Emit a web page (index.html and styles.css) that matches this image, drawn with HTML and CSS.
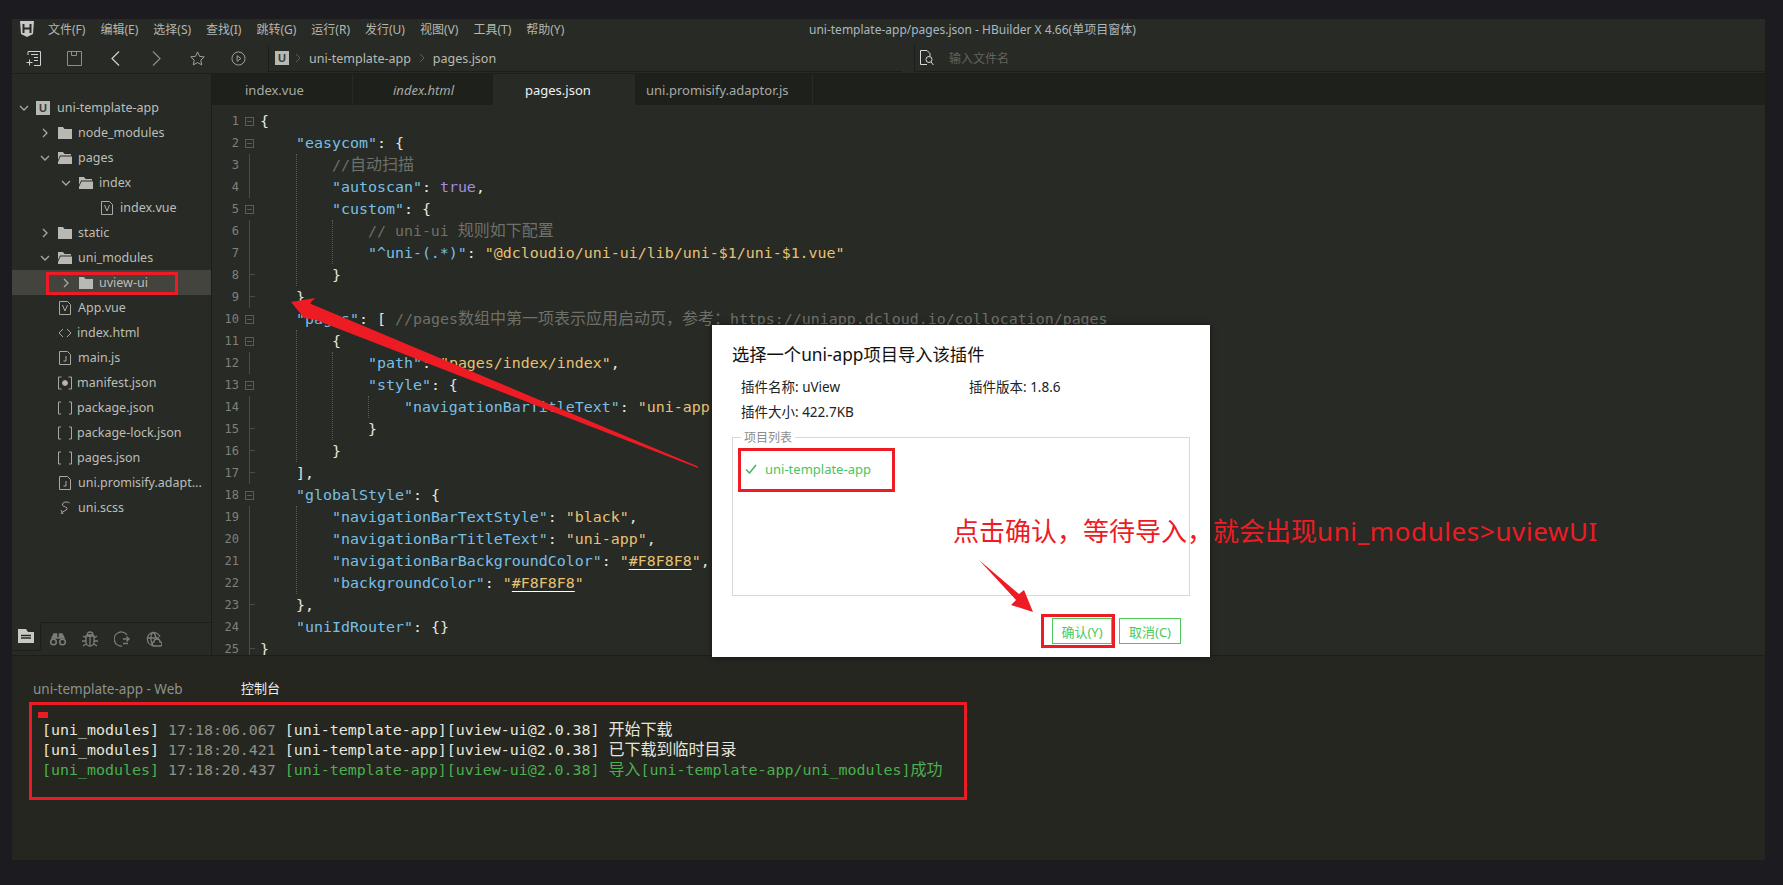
FILE: index.html
```html
<!DOCTYPE html>
<html lang="zh">
<head>
    <meta charset="UTF-8">
    <title>HBuilder X</title>
    <link rel="stylesheet" href="styles.css">
</head>
<body>
<div class="app">
    <!-- Menu bar -->
    <div class="menubar">
        <svg class="logo" width="14" height="16" viewBox="0 0 14 16"><path d="M0 0h14l-1 13-6 3-6-3z" fill="#c8c8c8"/><path d="M3.500 3v9M10.500 3v9M3.500 7.500h7" stroke="#282a25" stroke-width="2" fill="none"/></svg>
        <div class="menu">
            <span>文件(F)</span><span>编辑(E)</span><span>选择(S)</span><span>查找(I)</span><span>跳转(G)</span><span>运行(R)</span><span>发行(U)</span><span>视图(V)</span><span>工具(T)</span><span>帮助(Y)</span>
        </div>
        <div class="window-title">uni-template-app/pages.json - HBuilder X 4.66(单项目窗体)</div>
    </div>

    <!-- Toolbar -->
    <div class="toolbar">
        <div class="tools">
            <svg width="15" height="15" viewBox="0 0 15 15" fill="none" stroke="#d0d0d0"><path d="M2 4V.5h12.500v14H8M5 3.500h7M8 6.500h4M8 9.500h4M.5 11.500h6M3.500 8.500v6"/></svg>
            <svg width="15" height="15" viewBox="0 0 15 15" fill="none" stroke="#8c8e88"><path d="M.5.5h14v14H.5zM4.500.5v4h5v-4"/></svg>
            <svg width="9" height="15" viewBox="0 0 9 15" fill="none" stroke="#d0d0d0" stroke-width="1.200"><path d="M8 .5L1 7.500l7 7"/></svg>
            <svg width="9" height="15" viewBox="0 0 9 15" fill="none" stroke="#8c8e88" stroke-width="1.200"><path d="M1 .5l7 7-7 7"/></svg>
            <svg width="15" height="15" viewBox="0 0 16 16" fill="none" stroke="#a8a8a4"><path d="M8 1l2.200 4.700 5 .6-3.700 3.500 1 5L8 12.300 3.500 14.800l1-5L.8 6.300l5-.6z"/></svg>
            <svg width="15" height="15" viewBox="0 0 16 16" fill="none" stroke="#a8a8a4"><circle cx="8" cy="8" r="7"/><path d="M6.500 5l4 3-4 3z"/></svg>
        </div>
        <div class="crumbs">
            <span class="u-badge first">U</span>
            <svg class="crumb-sep" width="6" height="10" viewBox="0 0 6 10" fill="none" stroke="#5c5e58"><path d="M1 1l4 4-4 4"/></svg>
            <span>uni-template-app</span>
            <svg class="crumb-sep" width="6" height="10" viewBox="0 0 6 10" fill="none" stroke="#5c5e58"><path d="M1 1l4 4-4 4"/></svg>
            <span>pages.json</span>
        </div>
        <div class="file-search">
            <svg width="16" height="16" viewBox="0 0 16 16" fill="none" stroke="#d8d8d8"><path d="M8 .5H1.500v14H8M8 .5l3 3v3"/><circle cx="10" cy="9.500" r="3"/><path d="M12 12l2.500 3"/></svg>
            <span>输入文件名</span>
        </div>
    </div>

    <div class="workspace">
        <!-- Project tree -->
        <aside class="sidebar">
            <div class="tree">
                <div class="row lvl0"><svg class="chev" viewBox="0 0 10 10"><path d="M1 3l4 4 4-4"/></svg><span class="u-badge small">U</span><span>uni-template-app</span></div>
                <div class="row lvl1"><svg class="chev" viewBox="0 0 10 10"><path d="M3 1l4 4-4 4"/></svg><svg class="folder" viewBox="0 0 14 14"><path d="M0 1h5l1.500 2H14v10H0z"/></svg><span>node_modules</span></div>
                <div class="row lvl1"><svg class="chev" viewBox="0 0 10 10"><path d="M1 3l4 4 4-4"/></svg><svg class="folder" viewBox="0 0 14 14"><path d="M0 1h5l1.500 2H13v1.500H2L0 9z"/><path d="M2.500 5.500H14V13H0v-2z"/></svg><span>pages</span></div>
                <div class="row lvl2"><svg class="chev" viewBox="0 0 10 10"><path d="M1 3l4 4 4-4"/></svg><svg class="folder" viewBox="0 0 14 14"><path d="M0 1h5l1.500 2H13v1.500H2L0 9z"/><path d="M2.500 5.500H14V13H0v-2z"/></svg><span>index</span></div>
                <div class="row lvl3"><svg class="file" viewBox="0 0 12 14"><path d="M.5.5h8l3 3v10H.5z"/><path d="M3.500 4l2.500 6 2.500-6"/></svg><span>index.vue</span></div>
                <div class="row lvl1"><svg class="chev" viewBox="0 0 10 10"><path d="M3 1l4 4-4 4"/></svg><svg class="folder" viewBox="0 0 14 14"><path d="M0 1h5l1.500 2H14v10H0z"/></svg><span>static</span></div>
                <div class="row lvl1"><svg class="chev" viewBox="0 0 10 10"><path d="M1 3l4 4 4-4"/></svg><svg class="folder" viewBox="0 0 14 14"><path d="M0 1h5l1.500 2H13v1.500H2L0 9z"/><path d="M2.500 5.500H14V13H0v-2z"/></svg><span>uni_modules</span></div>
                <div class="row lvl2 selected"><svg class="chev" viewBox="0 0 10 10"><path d="M3 1l4 4-4 4"/></svg><svg class="folder" viewBox="0 0 14 14"><path d="M0 1h5l1.500 2H14v10H0z"/></svg><span>uview-ui</span><i class="mark-tree"></i></div>
                <div class="row lvl1b"><svg class="file" viewBox="0 0 12 14"><path d="M.5.5h8l3 3v10H.5z"/><path d="M3.500 4l2.500 6 2.500-6"/></svg><span>App.vue</span></div>
                <div class="row lvl1b"><svg class="glyph" viewBox="0 0 14 14"><path d="M5 3L1 7l4 4M9 3l4 4-4 4"/></svg><span>index.html</span></div>
                <div class="row lvl1b"><svg class="file" viewBox="0 0 12 14"><path d="M.5.5h8l3 3v10H.5z"/><path d="M7 5v5H4.500"/></svg><span>main.js</span></div>
                <div class="row lvl1b"><svg class="glyph" viewBox="0 0 14 14"><path d="M3.500 1H.5v12h3M10.500 1h3v12h-3"/><circle cx="7" cy="7" r="2.500" fill="#b8b8b4"/></svg><span>manifest.json</span></div>
                <div class="row lvl1b"><svg class="glyph" viewBox="0 0 14 14"><path d="M3 1H.5v12H3M11 1h2.500v12H11"/></svg><span>package.json</span></div>
                <div class="row lvl1b"><svg class="glyph" viewBox="0 0 14 14"><path d="M3 1H.5v12H3M11 1h2.500v12H11"/></svg><span>package-lock.json</span></div>
                <div class="row lvl1b"><svg class="glyph" viewBox="0 0 14 14"><path d="M3 1H.5v12H3M11 1h2.500v12H11"/></svg><span>pages.json</span></div>
                <div class="row lvl1b"><svg class="file" viewBox="0 0 12 14"><path d="M.5.5h8l3 3v10H.5z"/><path d="M7 5v5H4.500"/></svg><span>uni.promisify.adapt...</span></div>
                <div class="row lvl1b"><svg class="file" viewBox="0 0 12 14"><path d="M10.500 2C8 0 3 1 3.500 4c.5 2 5 1.500 4.500 4-.5 2-5 2-6 5M2 9l2 4"/></svg><span>uni.scss</span></div>
            </div>
            <div class="side-tabs">
                <div class="side-tab active"><svg width="16" height="14" viewBox="0 0 16 14"><path d="M0 0h8l2 3h6v11H0z" fill="#c8c8c4"/><path d="M3 6.500h10M3 9h10" stroke="#282a25" stroke-width="1.500"/></svg></div>
                <svg width="16" height="14" viewBox="0 0 16 14" fill="none" stroke="#7c7e78" stroke-width="1.500"><circle cx="3.500" cy="10" r="2.800"/><circle cx="12.500" cy="10" r="2.800"/><path d="M2 6l2-4h2.500v4h3V2H12l2 4z" fill="#7c7e78"/></svg>
                <svg width="16" height="16" viewBox="0 0 16 16" fill="none" stroke="#7c7e78" stroke-width="1.300"><path d="M5 4a3 3 0 0 1 6 0zM4 5h8v6a4 4 0 0 1-8 0zM8 5v10M4 7L1 5M12 7l3-2M4 10H0M12 10h4M4 13l-3 2M12 13l3 2"/></svg>
                <svg width="16" height="16" viewBox="0 0 16 16" fill="none" stroke="#7c7e78" stroke-width="1.300"><path d="M13 4A7 7 0 1 0 8 15M9 8h6M12.500 5.500L15 8l-2.500 2.500M9 12.500h5"/></svg>
                <svg width="16" height="16" viewBox="0 0 16 16" fill="none" stroke="#7c7e78" stroke-width="1.300"><path d="M7 14.500A6.500 6.500 0 1 1 14 6M1 7h12M7 1c-3 3-3 9 0 13M7 1c2 2 3 4 3 6"/><path d="M8 15a2 2 0 0 1 0-4 3 3 0 0 1 6 0 2 2 0 0 1 0 4z"/></svg>
            </div>
        </aside>

        <!-- Editor -->
        <main class="editor">
            <div class="tabs">
                <div class="tab t1">index.vue</div>
                <div class="tab t2"><em>index.html</em></div>
                <div class="tab t3 active">pages.json</div>
                <div class="tab t4">uni.promisify.adaptor.js</div>
            </div>
            <div class="code">
                <div class="gutter">
                    <div class="ln">1<b class="fold"></b></div>
                    <div class="ln">2<b class="fold"></b></div>
                    <div class="ln">3<b class="vl"></b></div>
                    <div class="ln">4<b class="vl"></b></div>
                    <div class="ln">5<b class="fold"></b></div>
                    <div class="ln">6<b class="vl"></b></div>
                    <div class="ln">7<b class="vl"></b></div>
                    <div class="ln">8<b class="vl end"></b></div>
                    <div class="ln">9<b class="vl end"></b></div>
                    <div class="ln">10<b class="fold"></b></div>
                    <div class="ln">11<b class="fold"></b></div>
                    <div class="ln">12<b class="vl"></b></div>
                    <div class="ln">13<b class="fold"></b></div>
                    <div class="ln">14<b class="vl"></b></div>
                    <div class="ln">15<b class="vl end"></b></div>
                    <div class="ln">16<b class="vl end"></b></div>
                    <div class="ln">17<b class="vl end"></b></div>
                    <div class="ln">18<b class="fold"></b></div>
                    <div class="ln">19<b class="vl"></b></div>
                    <div class="ln">20<b class="vl"></b></div>
                    <div class="ln">21<b class="vl"></b></div>
                    <div class="ln">22<b class="vl"></b></div>
                    <div class="ln">23<b class="vl end"></b></div>
                    <div class="ln">24<b class="vl"></b></div>
                    <div class="ln">25<b class="vl end"></b></div>
                </div>
                <div class="source-wrap">
                    <i class="guide g1"></i><i class="guide g2"></i><i class="guide g3"></i><i class="guide g4"></i><i class="guide g5"></i><i class="guide g6"></i>
<pre class="source"><span class="w">{</span>
    <span class="k">"easycom"</span><span class="w">: {</span>
        <span class="c">//<span class="zh">自动扫描</span></span>
        <span class="k">"autoscan"</span><span class="w">: </span><span class="b">true</span><span class="w">,</span>
        <span class="k">"custom"</span><span class="w">: {</span>
            <span class="c">// uni-ui <span class="zh">规则如下配置</span></span>
            <span class="k">"^uni-(.*)"</span><span class="w">: </span><span class="s">"@dcloudio/uni-ui/lib/uni-$1/uni-$1.vue"</span>
        <span class="w">}</span>
    <span class="w">},</span>
    <span class="k">"pages"</span><span class="w">: [ </span><span class="c">//pages<span class="zh">数组中第一项表示应用启动页，参考：</span>https://uniapp.dcloud.io/collocation/pages</span>
        <span class="w">{</span>
            <span class="k">"path"</span><span class="w">: </span><span class="s">"pages/index/index"</span><span class="w">,</span>
            <span class="k">"style"</span><span class="w">: {</span>
                <span class="k">"navigationBarTitleText"</span><span class="w">: </span><span class="s">"uni-app"</span>
            <span class="w">}</span>
        <span class="w">}</span>
    <span class="w">],</span>
    <span class="k">"globalStyle"</span><span class="w">: {</span>
        <span class="k">"navigationBarTextStyle"</span><span class="w">: </span><span class="s">"black"</span><span class="w">,</span>
        <span class="k">"navigationBarTitleText"</span><span class="w">: </span><span class="s">"uni-app"</span><span class="w">,</span>
        <span class="k">"navigationBarBackgroundColor"</span><span class="w">: </span><span class="s">"<u>#F8F8F8</u>"</span><span class="w">,</span>
        <span class="k">"backgroundColor"</span><span class="w">: </span><span class="s">"<u>#F8F8F8</u>"</span>
    <span class="w">},</span>
    <span class="k">"uniIdRouter"</span><span class="w">: {}</span>
<span class="w">}</span></pre>
                </div>
            </div>
        </main>
    </div>

    <!-- Console -->
    <section class="console">
        <div class="console-tabs">
            <span class="ctab">uni-template-app - Web</span>
            <span class="ctab active">控制台</span>
        </div>
        <div class="log mark-box">
            <i class="dot"></i>
            <div class="log-line"><span class="w">[uni_modules]</span> <span class="time">17:18:06.067</span> <span class="w">[uni-template-app][uview-ui@2.0.38]</span> <span class="w zh">开始下载</span></div>
            <div class="log-line"><span class="w">[uni_modules]</span> <span class="time">17:18:20.421</span> <span class="w">[uni-template-app][uview-ui@2.0.38]</span> <span class="w zh">已下载到临时目录</span></div>
            <div class="log-line ok">[uni_modules] <span class="time">17:18:20.437</span> [uni-template-app][uview-ui@2.0.38] <span class="zh">导入</span>[uni-template-app/uni_modules]<span class="zh">成功</span></div>
        </div>
    </section>
</div>

<!-- Import dialog, over the editor -->
<div class="dialog">
    <h3>选择一个uni-app项目导入该插件</h3>
    <div class="info">
        <span>插件名称: uView</span><span>插件版本: 1.8.6</span>
        <span>插件大小: 422.7KB</span>
    </div>
    <div class="project-list">
        <span class="legend">项目列表</span>
        <div class="project mark-box">
            <svg width="12" height="10" viewBox="0 0 12 10" fill="none" stroke="#3fb56b" stroke-width="1.500"><path d="M1 5.500L4.500 9 11 1"/></svg>
            <span>uni-template-app</span>
        </div>
    </div>
    <div class="actions">
        <span class="btn-mark"><button class="btn">确认(Y)</button></span>
        <button class="btn cancel">取消(C)</button>
    </div>
</div>

<!-- Screenshot annotations -->
<div class="note">点击确认，等待导入，就会出现<span class="note-latin">uni_modules&gt;uviewUI</span></div>
<svg class="arrows" width="1783" height="885" viewBox="0 0 1783 885">
    <path d="M291 302L315 298L310 303.600L698 466.500V468L316 320L304 318z" fill="#ed1c24"/>
    <path d="M979 560L1019 594L1024 590L1033 612L1011 605L1016 600z" fill="#ed1c24"/>
</svg>
</body>
</html>
```

FILE: styles.css
```css
/* General Styles */
html, body {
    margin: 0;
    height: 885px;
    overflow: hidden;
}

body {
    position: relative;
    background: #1b1b20;
    padding: 19px 18px 25px 12px;
    box-sizing: border-box;
    font-family: "Noto Sans", "Noto Sans CJK SC", sans-serif;
    font-size: 12px;
    color: #c8c8c4;
}

.app {
    height: 841px;
    background: #282a25;
    display: flex;
    flex-direction: column;
}

/* Menu bar */
.menubar {
    height: 20px;
    display: flex;
    align-items: center;
    padding: 0 0 4px 8px;
    flex: none;
    position: relative;
}

.logo {
    margin-right: 14px;
}

.menu {
    display: flex;
    gap: 15px;
    color: #b4b6b0;
}

.window-title {
    position: absolute;
    left: 797px;
    top: 1px;
    color: #a8b8c4;
    font-size: 12px;
}

/* Toolbar */
.toolbar {
    height: 30px;
    flex: none;
    display: flex;
    align-items: center;
    border-bottom: 1px solid #1c1e19;
}

.tools {
    width: 256px;
    flex: none;
    padding-left: 1px;
    box-sizing: border-box;
    display: grid;
    grid-template-columns: repeat(6, 41px);
    justify-items: center;
    align-items: center;
}

.crumbs {
    width: 634px;
    height: 27px;
    flex: none;
    box-sizing: border-box;
    display: flex;
    align-items: center;
    gap: 8px;
    padding-left: 6px;
    margin-bottom: -1px;
    color: #b8bab4;
    border-bottom: 1px solid #1c1e19;
    border-left: 1px solid #1c1e19;
    font-size: 12.500px;
}

.u-badge.first {
    margin-right: -2px;
}

.file-search {
    margin-left: 12px;
    flex: 1;
    height: 27px;
    margin-bottom: -1px;
    box-sizing: border-box;
    display: flex;
    align-items: center;
    gap: 14px;
    padding-left: 4px;
    color: #62645e;
    border-bottom: 1px solid #1c1e19;
    border-left: 1px solid #1c1e19;
}

.u-badge {
    width: 14px;
    height: 14px;
    background: #b8b8b4;
    color: #3a3c37;
    font: bold 11px/14px "Liberation Sans", sans-serif;
    text-align: center;
    display: inline-block;
}

/* Workspace */
.workspace {
    flex: none;
    height: 581px;
    display: flex;
    border-bottom: 1px solid #1c1e19;
}

.sidebar {
    width: 199px;
    flex: none;
    border-right: 1px solid #1c1e19;
    display: flex;
    flex-direction: column;
    justify-content: space-between;
}

.tree {
    padding-top: 21px;
    font-size: 12.500px;
    color: #bcbeb8;
}

.row {
    height: 25px;
    display: flex;
    align-items: center;
    position: relative;
    white-space: nowrap;
}

.row.selected {
    background: #42443d;
}

.lvl0 { padding-left: 7px; }
.lvl1 { padding-left: 28px; }
.lvl1b { padding-left: 47px; }
.lvl2 { padding-left: 49px; }
.lvl3 { padding-left: 89px; }

.chev {
    width: 10px;
    height: 10px;
    margin-right: 8px;
    fill: none;
    stroke: #a8a8a4;
    stroke-width: 1.300;
}

.lvl0 .u-badge {
    margin-right: 7px;
    flex: none;
}

.lvl0 .chev {
    margin-right: 7px;
}

.folder {
    width: 14px;
    height: 14px;
    margin-right: 6px;
    fill: #b8b8b4;
}

.file {
    width: 12px;
    height: 14px;
    margin-right: 7px;
    fill: none;
    stroke: #a8a8a4;
}

.glyph {
    width: 14px;
    height: 14px;
    margin: 0 5px 0 -1px;
    fill: none;
    stroke: #a8a8a4;
}

.side-tabs {
    height: 33px;
    display: flex;
    align-items: center;
    gap: 16px;
    position: relative;
}

.side-tabs::before {
    content: "";
    position: absolute;
    left: 29px;
    right: 0;
    top: 0;
    height: 1px;
    background: #1c1e19;
}

.side-tab {
    width: 29px;
    height: 29px;
    align-self: flex-start;
    margin-right: -7px;
    box-sizing: border-box;
    display: flex;
    align-items: center;
    justify-content: center;
    background: #282a25;
    border-right: 1px solid #1c1e19;
    border-bottom: 1px solid #1c1e19;
    border-bottom-right-radius: 3px;
}

/* Editor */
.editor {
    flex: 1;
    min-width: 0;
    min-height: 0;
    display: flex;
    flex-direction: column;
}

.tabs {
    height: 31px;
    flex: none;
    display: flex;
    background: #1e201b;
    font-size: 13px;
    color: #a8aaa4;
}

.tab {
    display: flex;
    align-items: center;
    border-right: 1px solid #282a25;
}

.t1 { width: 141px; padding-left: 33px; box-sizing: border-box; }
.t2 { width: 141px; padding-left: 40px; box-sizing: border-box; }
.t3 { width: 141px; padding-left: 31px; box-sizing: border-box; }
.t4 { width: 178px; padding-left: 11px; box-sizing: border-box; }

.tab.active {
    background: #282a25;
    color: #f0f0f0;
}

.code {
    flex: 1;
    min-height: 0;
    display: flex;
    overflow: hidden;
    padding-top: 5px;
    font-family: "DejaVu Sans Mono", "Noto Sans CJK SC", monospace;
    font-size: 14.950px;
    line-height: 22px;
}

.gutter {
    width: 48px;
    flex: none;
    font-size: 12px;
    color: #7f817b;
}

.ln {
    height: 22px;
    width: 27px;
    text-align: right;
    position: relative;
}

.fold {
    position: absolute;
    left: 33px;
    top: 7px;
    width: 7px;
    height: 7px;
    border: 1px solid #5a5c56;
}

.fold::after {
    content: "";
    position: absolute;
    left: 1px;
    right: 1px;
    top: 3px;
    height: 1px;
    background: #5a5c56;
}

.vl {
    position: absolute;
    left: 37px;
    top: 0;
    width: 1px;
    height: 22px;
    background: #4a4c46;
}

.vl.end::after {
    content: "";
    position: absolute;
    left: 0;
    top: 10px;
    width: 6px;
    height: 1px;
    background: #4a4c46;
}

.source-wrap {
    position: relative;
}

/* dotted indent guides over the source */
.guide {
    position: absolute;
    width: 0;
    border-left: 1px dotted #5a5c54;
}

.g1 { left: 36px; top: 44px; height: 132px; }
.g2 { left: 72px; top: 110px; height: 44px; }
.g3 { left: 36px; top: 220px; height: 132px; }
.g4 { left: 72px; top: 242px; height: 88px; }
.g5 { left: 108px; top: 286px; height: 22px; }
.g6 { left: 36px; top: 396px; height: 88px; }

.source {
    margin: 0;
    font: inherit;
    color: #e8e8e0;
    white-space: pre;
}

.zh {
    font-size: 16px;
}

.k { color: #78bfe6; }
.w { color: #e6e6de; }
.s { color: #e6c274; }
.c { color: #6f7068; }
.b { color: #a58ae0; }

.source u {
    text-decoration: underline;
    text-decoration-color: #fff;
    text-underline-offset: 3px;
}

/* Console */
.console {
    flex: 1;
    background: #24261f;
    padding: 22px 0 0 17px;
}

.console-tabs {
    display: flex;
    align-items: center;
    color: #8f918b;
    height: 24px;
    margin-top: -1px;
    margin-bottom: 1px;
    font-size: 13.500px;
}

.ctab {
    width: 204px;
    margin-left: 4px;
}

.ctab.active {
    color: #f0f0f0;
    font-size: 13px;
    margin-top: -4px;
}

.log {
    width: 938px;
    height: 98px;
    box-sizing: border-box;
    position: relative;
    padding: 15px 0 0 10px;
    font-family: "DejaVu Sans Mono", "Noto Sans CJK SC", monospace;
    font-size: 14.950px;
    line-height: 20px;
    color: #e6e6de;
}

.mark-box {
    border: 3px solid #ed1c24;
}

.dot {
    position: absolute;
    left: 6px;
    top: 7px;
    width: 10px;
    height: 6px;
    background: #ed1c24;
}

.log-line {
    white-space: pre;
}

.time { color: #8f918b; }
.ok { color: #4caf50; }

.mark-tree {
    position: absolute;
    left: 34px;
    top: 2px;
    width: 132px;
    height: 23px;
    box-sizing: border-box;
    border: 3px solid #ed1c24;
}

/* Dialog */
.dialog {
    position: absolute;
    left: 712px;
    top: 325px;
    width: 498px;
    height: 332px;
    box-sizing: border-box;
    padding: 18px 20px 0;
    background: #fff;
    color: #222;
    box-shadow: 0 0 6px rgba(0, 0, 0, 0.5);
}

.dialog h3 {
    margin: 0;
    font-size: 17.300px;
    font-weight: 400;
    line-height: 24px;
    color: #111;
}

.info {
    display: grid;
    grid-template-columns: 228px 1fr;
    row-gap: 7px;
    padding: 11px 0 0 9px;
    font-size: 13.500px;
    line-height: 18px;
}

.project-list {
    position: relative;
    height: 159px;
    box-sizing: border-box;
    width: 458px;
    margin-top: 16px;
    border: 1px solid #d8d8d8;
    padding: 10px 5px;
}

.legend {
    position: absolute;
    left: 8px;
    top: -9px;
    padding: 0 3px;
    background: #fff;
    color: #8c8c8c;
    line-height: 18px;
}

.project {
    width: 157px;
    height: 44px;
    box-sizing: border-box;
    display: flex;
    align-items: center;
    gap: 8px;
    padding: 0 0 3px 4px;
    color: #49c463;
    font-size: 13px;
}

.actions {
    display: flex;
    justify-content: flex-end;
    align-items: center;
    gap: 4px;
    padding: 18px 9px 0 0;
}

.btn-mark {
    display: flex;
    padding: 1px 0 1px 8px;
    border: 3px solid #ed1c24;
}

.btn {
    width: 60px;
    height: 26px;
    padding: 0;
    border: 1px solid #4cc85a;
    background: #fff;
    color: #4cc85a;
    font: 13px "Noto Sans", "Noto Sans CJK SC", sans-serif;
}

.btn.cancel {
    width: 62px;
    height: 26px;
}

.note {
    position: absolute;
    left: 953px;
    top: 514px;
    font-family: "Liberation Sans", "Noto Sans CJK SC", sans-serif;
    font-size: 26px;
    line-height: 34px;
    color: #ed1c24;
    white-space: nowrap;
}

.note-latin {
    font-family: "Noto Sans", sans-serif;
    letter-spacing: 0.600px;
}

.arrows {
    position: absolute;
    left: 0;
    top: 0;
    pointer-events: none;
}
```
